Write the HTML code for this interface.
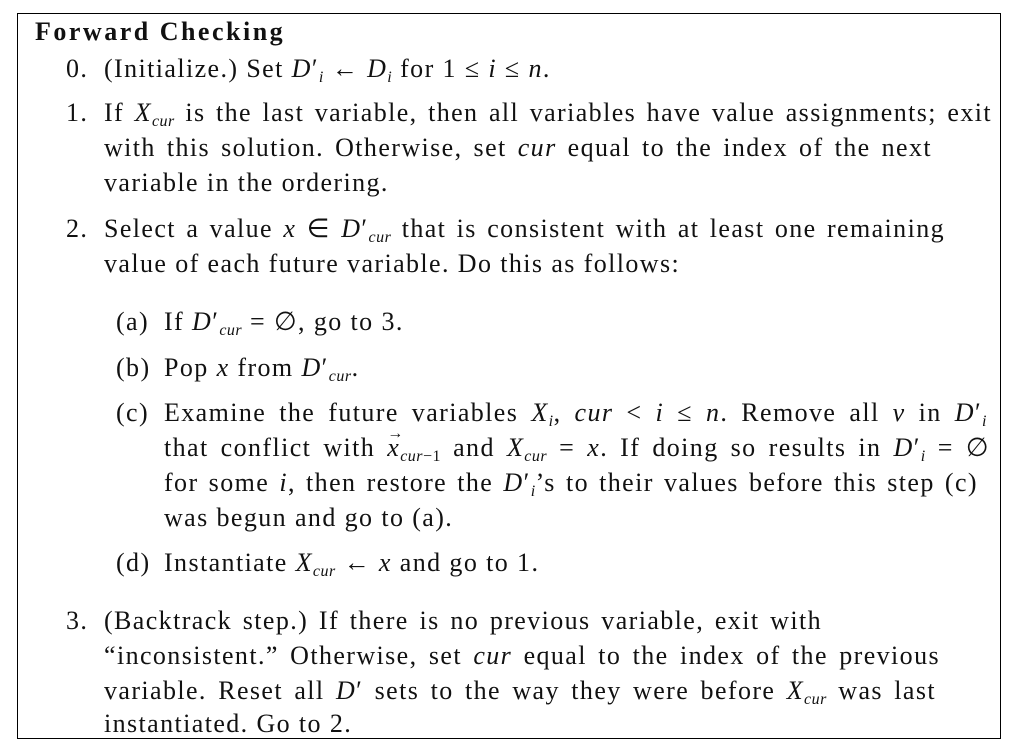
<!DOCTYPE html>
<html><head><meta charset="utf-8"><style>
body{margin:0;width:1018px;height:752px;background:#fff;position:relative;overflow:hidden;font-family:"Liberation Serif",serif;font-size:26px;letter-spacing:1.4px;color:#111}
.box{position:absolute;left:17px;top:13px;width:984px;height:726px;border:1.5px solid #000;box-sizing:border-box}
.l{position:absolute;line-height:28px;white-space:nowrap}
.j{text-align:justify;text-align-last:justify;white-space:normal}
i{font-style:italic}
sub{font-size:16px;vertical-align:-5px;line-height:0;letter-spacing:0.5px}
.v{position:relative;display:inline-block}
.v:before{content:"→";position:absolute;left:0px;top:-14px;font-size:16px;font-style:normal}
</style></head><body>
<div class="box"></div>
<div class="l" style="left:35px;top:18px;font-weight:bold;font-size:26px;letter-spacing:2.5px">Forward Checking</div>
<div class="l" style="left:66px;top:55px">0.</div>
<div class="l" style="left:104px;top:55px">(Initialize.) Set <i>D</i>′<sub><i>i</i></sub> ← <i>D<sub>i</sub></i> for 1 ≤ <i>i</i> ≤ <i>n</i>.</div>

<div class="l" style="left:66px;top:99px">1.</div>
<div class="l j" style="left:104px;top:99px;width:888px">If <i>X<sub>cur</sub></i> is the last variable, then all variables have value assignments; exit</div>
<div class="l j" style="left:104px;top:134px;width:828px">with this solution. Otherwise, set <i>cur</i> equal to the index of the next</div>
<div class="l" style="left:104px;top:169px">variable in the ordering.</div>

<div class="l" style="left:66px;top:215px">2.</div>
<div class="l j" style="left:104px;top:215px;width:841px">Select a value <i>x</i> ∈ <i>D</i>′<sub><i>cur</i></sub> that is consistent with at least one remaining</div>
<div class="l" style="left:104px;top:250px">value of each future variable. Do this as follows:</div>

<div class="l" style="left:116px;top:308px">(a)</div>
<div class="l" style="left:164px;top:308px">If <i>D</i>′<sub><i>cur</i></sub> = ∅, go to 3.</div>
<div class="l" style="left:116px;top:354px">(b)</div>
<div class="l" style="left:164px;top:354px">Pop <i>x</i> from <i>D</i>′<sub><i>cur</i></sub>.</div>
<div class="l" style="left:116px;top:399px">(c)</div>
<div class="l j" style="left:164px;top:399px;width:823px">Examine the future variables <i>X<sub>i</sub></i>, <i>cur</i> &lt; <i>i</i> ≤ <i>n</i>. Remove all <i>v</i> in <i>D</i>′<sub><i>i</i></sub></div>
<div class="l j" style="left:164px;top:434px;width:826px">that conflict with <i class="v">x</i><sub><i>cur</i>−1</sub> and <i>X<sub>cur</sub></i> = <i>x</i>. If doing so results in <i>D</i>′<sub><i>i</i></sub> = ∅</div>
<div class="l j" style="left:164px;top:469px;width:814px">for some <i>i</i>, then restore the <i>D</i>′<sub><i>i</i></sub>’s to their values before this step (c)</div>
<div class="l" style="left:164px;top:504px">was begun and go to (a).</div>
<div class="l" style="left:116px;top:549px">(d)</div>
<div class="l" style="left:164px;top:549px">Instantiate <i>X<sub>cur</sub></i> ← <i>x</i> and go to 1.</div>

<div class="l" style="left:66px;top:607px">3.</div>
<div class="l j" style="left:104px;top:607px;width:718px">(Backtrack step.) If there is no previous variable, exit with</div>
<div class="l j" style="left:104px;top:642px;width:836px">“inconsistent.” Otherwise, set <i>cur</i> equal to the index of the previous</div>
<div class="l j" style="left:104px;top:677px;width:832px">variable. Reset all <i>D</i>′ sets to the way they were before <i>X<sub>cur</sub></i> was last</div>
<div class="l" style="left:104px;top:710px">instantiated. Go to 2.</div>
</body></html>
